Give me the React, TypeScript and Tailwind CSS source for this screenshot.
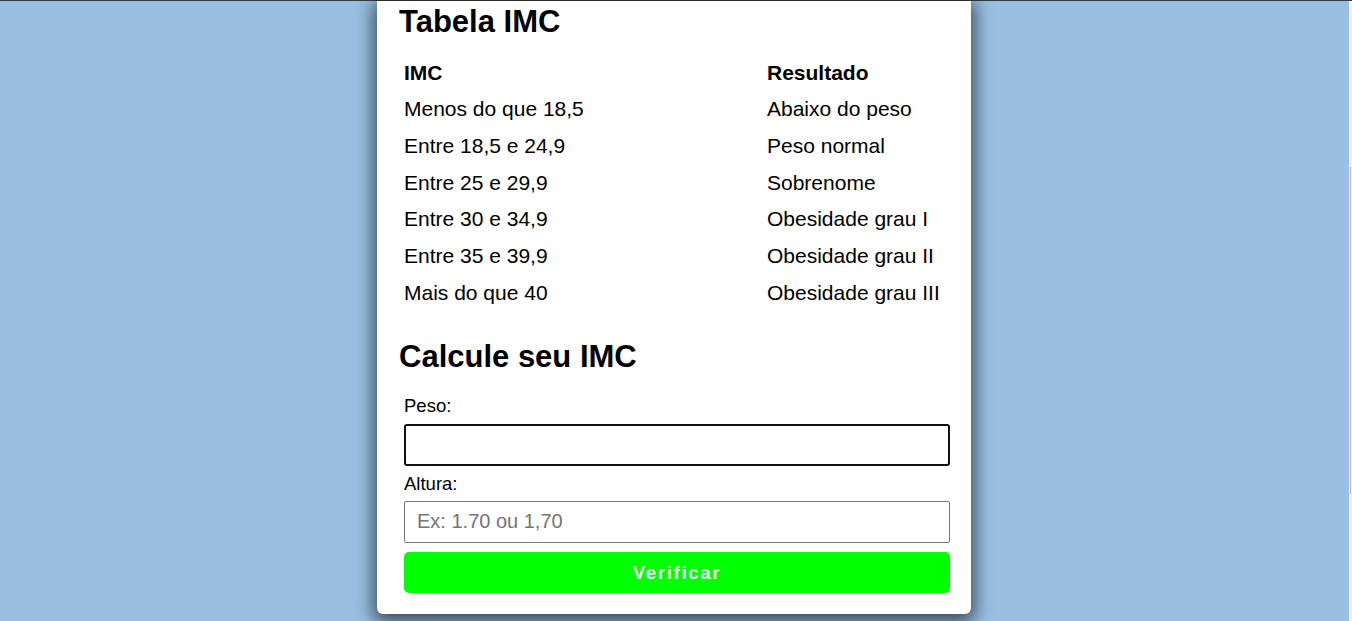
const rows = [
  ["Menos do que 18,5", "Abaixo do peso"],
  ["Entre 18,5 e 24,9", "Peso normal"],
  ["Entre 25 e 29,9", "Sobrenome"],
  ["Entre 30 e 34,9", "Obesidade grau I"],
  ["Entre 35 e 39,9", "Obesidade grau II"],
  ["Mais do que 40", "Obesidade grau III"],
];

function TabelaIMC() {
  return (
    <section>
      <h2 className="text-[31px] leading-[36px] font-bold">Tabela IMC</h2>
      <div className="mt-[14.7px] pl-[5px] grid grid-cols-[363px_1fr] text-[21px]">
        <div className="h-[36.7px] leading-[36.7px] font-bold">IMC</div>
        <div className="h-[36.7px] leading-[36.7px] font-bold">Resultado</div>
        {rows.map(([faixa, resultado]) => (
          <>
            <div key={faixa} className="h-[36.7px] leading-[36.7px]">{faixa}</div>
            <div key={resultado} className="h-[36.7px] leading-[36.7px]">{resultado}</div>
          </>
        ))}
      </div>
    </section>
  );
}

function CalculeIMC() {
  return (
    <section className="mt-[27.4px]">
      <h2 className="text-[31px] leading-[36px] font-bold">Calcule seu IMC</h2>
      <form className="mt-[20.6px] pl-[5px] flex flex-col" onSubmit={(e) => e.preventDefault()}>
        <label className="text-[18.5px] leading-[22px]">Peso:</label>
        <input
          type="text"
          className="mt-[6.4px] h-[42px] border-2 border-[#101010] rounded-[3px] px-[10px] text-[20px] outline-none"
        />
        <label className="mt-[7.6px] text-[18.5px] leading-[22px]">Altura:</label>
        <input
          type="text"
          placeholder="Ex: 1.70 ou 1,70"
          className="mt-[5.4px] h-[42px] border border-[#767676] rounded-[2px] pl-[12px] text-[20px] placeholder:text-[#757575] outline-none"
        />
        <button
          type="submit"
          className="mt-[9px] h-[41.6px] bg-[#00ff00] rounded-[5px] text-white font-bold text-[18.5px] tracking-[1.7px]"
        >
          Verificar
        </button>
      </form>
    </section>
  );
}

export default function App() {
  return (
    <div className="h-[621px] overflow-hidden bg-[#9abfe3] flex flex-col font-['Liberation_Sans',Arial,sans-serif] text-black">
      <div className="h-px bg-[#3a3a3a] shrink-0" />
      <div className="flex flex-1 min-h-0">
        <main className="flex-1 flex justify-center items-start pr-px">
          <div className="w-[594px] bg-white rounded-b-[6px] shadow-[0_5px_18px_4px_rgba(0,0,0,0.6)] pt-[3px] pb-[21px] pl-[22px] pr-[21px]">
            <TabelaIMC />
            <CalculeIMC />
          </div>
        </main>
        <div className="w-[3px] bg-[#eef2f6] flex flex-col pt-[166px]">
          <div className="ml-px w-px h-[327px] bg-[#b5b5b5]" />
        </div>
      </div>
    </div>
  );
}
